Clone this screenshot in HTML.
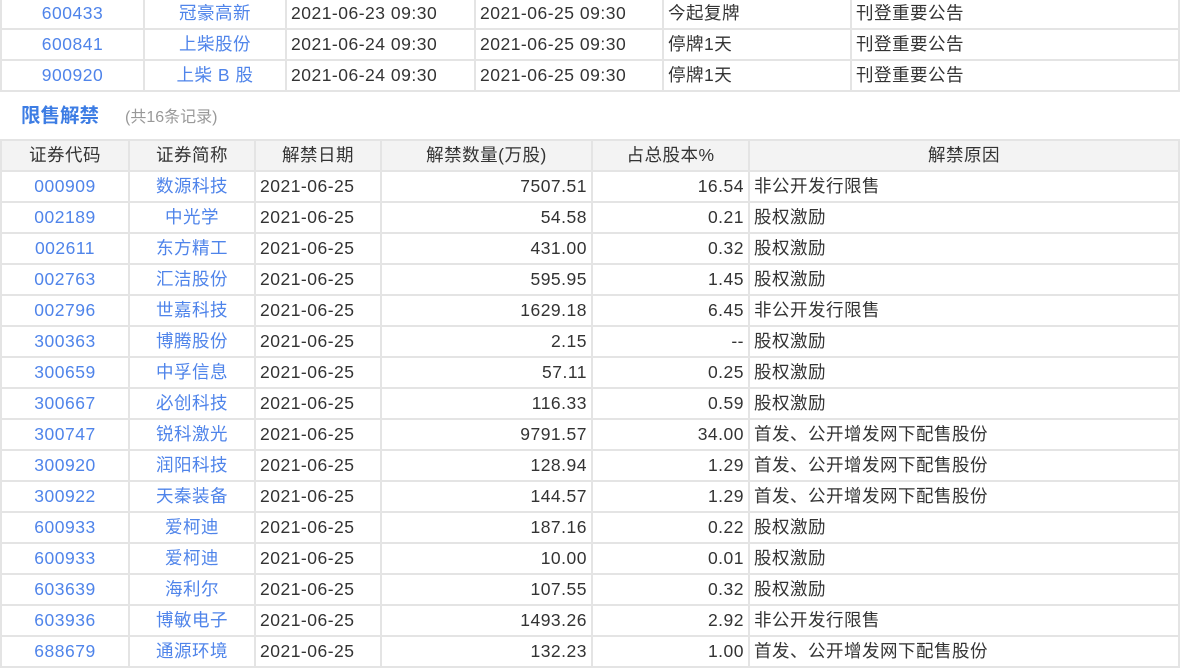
<!DOCTYPE html>
<html><head><meta charset="utf-8"><style>
body{margin:0;background:#fff;font-family:"Liberation Sans","Noto Sans CJK SC",sans-serif;font-size:17.5px;letter-spacing:0.5px;color:#333;width:1193px;height:671px;overflow:hidden;position:relative}
table{border-collapse:collapse;table-layout:fixed;position:absolute;left:0}
td,th{border:2px solid #e4e4e4;height:29px;line-height:29px;padding:0 4px;white-space:nowrap;overflow:hidden;font-weight:normal;vertical-align:middle}
.l{color:#4f84ea;text-align:center}
.r{text-align:right}
th{background:#f3f3f3;color:#333;text-align:center}
#t1{top:-3px;width:1180px}
#t2{top:139px;width:1180px}
.title{position:absolute;left:21px;top:99px;font-size:19.5px;letter-spacing:0;font-weight:bold;color:#3d7de4}
.sub{position:absolute;left:125px;top:103px;font-size:16px;letter-spacing:0;color:#999}
</style></head><body>
<table id="t1"><colgroup><col style="width:143px"><col style="width:142px"><col style="width:189px"><col style="width:188px"><col style="width:188px"><col></colgroup>
<tr><td class="l">600433</td><td class="l">冠豪高新</td><td>2021-06-23 09:30</td><td>2021-06-25 09:30</td><td>今起复牌</td><td>刊登重要公告</td></tr>
<tr><td class="l">600841</td><td class="l">上柴股份</td><td>2021-06-24 09:30</td><td>2021-06-25 09:30</td><td>停牌1天</td><td>刊登重要公告</td></tr>
<tr><td class="l">900920</td><td class="l">上柴 B 股</td><td>2021-06-24 09:30</td><td>2021-06-25 09:30</td><td>停牌1天</td><td>刊登重要公告</td></tr>
</table>
<div class="title">限售解禁</div><div class="sub">(共16条记录)</div>
<table id="t2"><colgroup><col style="width:128px"><col style="width:126px"><col style="width:126px"><col style="width:211px"><col style="width:157px"><col></colgroup>
<tr><th>证券代码</th><th>证券简称</th><th>解禁日期</th><th>解禁数量(万股)</th><th>占总股本%</th><th>解禁原因</th></tr>
<tr><td class="l">000909</td><td class="l">数源科技</td><td>2021-06-25</td><td class="r">7507.51</td><td class="r">16.54</td><td>非公开发行限售</td></tr>
<tr><td class="l">002189</td><td class="l">中光学</td><td>2021-06-25</td><td class="r">54.58</td><td class="r">0.21</td><td>股权激励</td></tr>
<tr><td class="l">002611</td><td class="l">东方精工</td><td>2021-06-25</td><td class="r">431.00</td><td class="r">0.32</td><td>股权激励</td></tr>
<tr><td class="l">002763</td><td class="l">汇洁股份</td><td>2021-06-25</td><td class="r">595.95</td><td class="r">1.45</td><td>股权激励</td></tr>
<tr><td class="l">002796</td><td class="l">世嘉科技</td><td>2021-06-25</td><td class="r">1629.18</td><td class="r">6.45</td><td>非公开发行限售</td></tr>
<tr><td class="l">300363</td><td class="l">博腾股份</td><td>2021-06-25</td><td class="r">2.15</td><td class="r">--</td><td>股权激励</td></tr>
<tr><td class="l">300659</td><td class="l">中孚信息</td><td>2021-06-25</td><td class="r">57.11</td><td class="r">0.25</td><td>股权激励</td></tr>
<tr><td class="l">300667</td><td class="l">必创科技</td><td>2021-06-25</td><td class="r">116.33</td><td class="r">0.59</td><td>股权激励</td></tr>
<tr><td class="l">300747</td><td class="l">锐科激光</td><td>2021-06-25</td><td class="r">9791.57</td><td class="r">34.00</td><td>首发、公开增发网下配售股份</td></tr>
<tr><td class="l">300920</td><td class="l">润阳科技</td><td>2021-06-25</td><td class="r">128.94</td><td class="r">1.29</td><td>首发、公开增发网下配售股份</td></tr>
<tr><td class="l">300922</td><td class="l">天秦装备</td><td>2021-06-25</td><td class="r">144.57</td><td class="r">1.29</td><td>首发、公开增发网下配售股份</td></tr>
<tr><td class="l">600933</td><td class="l">爱柯迪</td><td>2021-06-25</td><td class="r">187.16</td><td class="r">0.22</td><td>股权激励</td></tr>
<tr><td class="l">600933</td><td class="l">爱柯迪</td><td>2021-06-25</td><td class="r">10.00</td><td class="r">0.01</td><td>股权激励</td></tr>
<tr><td class="l">603639</td><td class="l">海利尔</td><td>2021-06-25</td><td class="r">107.55</td><td class="r">0.32</td><td>股权激励</td></tr>
<tr><td class="l">603936</td><td class="l">博敏电子</td><td>2021-06-25</td><td class="r">1493.26</td><td class="r">2.92</td><td>非公开发行限售</td></tr>
<tr><td class="l">688679</td><td class="l">通源环境</td><td>2021-06-25</td><td class="r">132.23</td><td class="r">1.00</td><td>首发、公开增发网下配售股份</td></tr>
</table>
</body></html>
